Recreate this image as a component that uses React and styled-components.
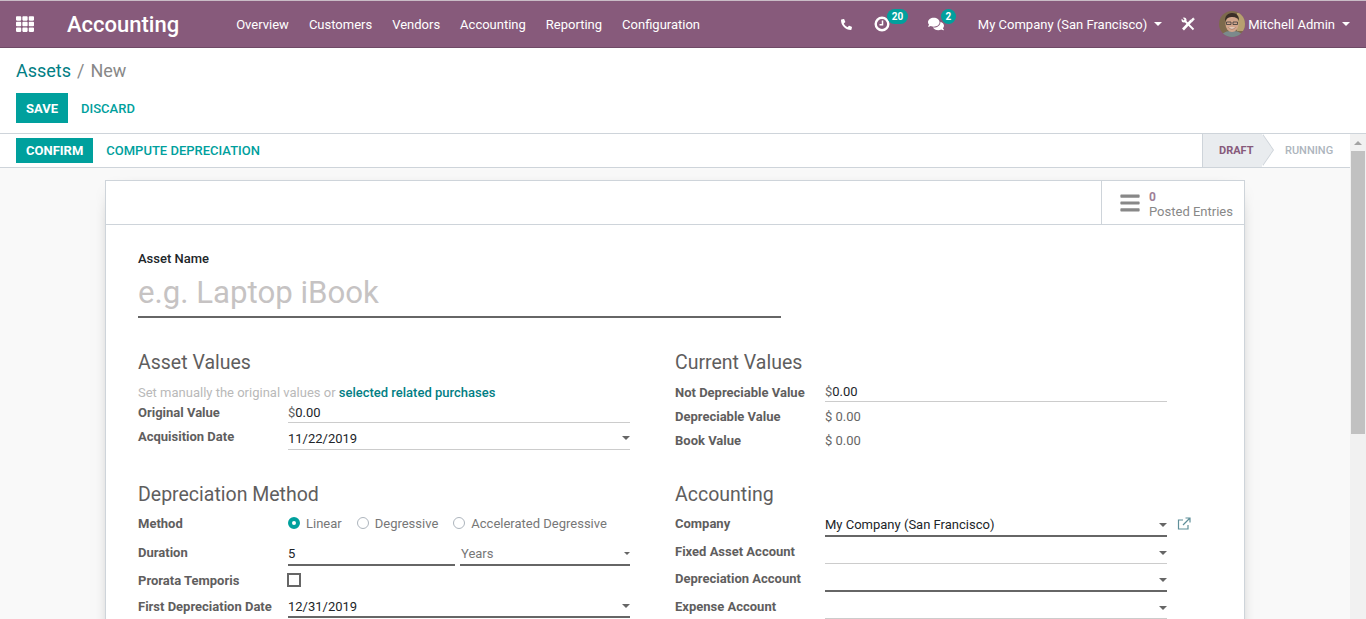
import styled, { createGlobalStyle } from "styled-components";
import { FaBars, FaComments, FaPhone, FaTh } from "react-icons/fa";

const GlobalStyle = createGlobalStyle`
  html, body {
    margin: 0;
    height: 100%;
    overflow: hidden;
  }
  body {
    font-family: Roboto, "Noto Sans", sans-serif;
    font-size: 13px;
    color: #4c4c4c;
    background: #fff;
  }
`;

const Page = styled.div`
  height: 100vh;
  display: flex;
  flex-direction: column;
`;

const NavBar = styled.header`
  flex: none;
  box-sizing: border-box;
  height: 48px;
  display: flex;
  align-items: center;
  background: #875a7b;
  border-top: 1px solid #c9bcc6;
  border-bottom: 1px solid #6f4a66;
  color: #fff;
`;

const AppsButton = styled.span`
  display: flex;
  width: 18px;
  margin-left: 16px;
  font-size: 18px;
`;

const Brand = styled.span`
  margin-left: 33px;
  margin-right: 57px;
  font-size: 22px;
  font-weight: 500;
`;

const MainMenu = styled.nav`
  display: flex;
  gap: 20px;
  font-size: 13px;
`;

const Systray = styled.div`
  margin-left: auto;
  display: flex;
  align-items: center;
  font-size: 13px;
`;

const TrayIcon = styled.span`
  position: relative;
  display: flex;
  align-items: center;
  justify-content: center;
  width: 16px;
  height: 16px;
  margin-right: ${({ $mr }) => $mr}px;
`;

const PhoneIcon = styled(FaPhone)`
  transform: scaleX(-1);
`;

const Badge = styled.span`
  position: absolute;
  top: -7px;
  left: ${({ $left }) => $left}px;
  height: 15px;
  min-width: 15px;
  padding: 0 ${({ $pad = 4 }) => $pad}px;
  box-sizing: border-box;
  border-radius: 8px;
  background: #00a09d;
  color: #fff;
  font-size: 10px;
  font-weight: 700;
  line-height: 15px;
  text-align: center;
`;

const Caret = styled.span`
  display: inline-block;
  width: 0;
  height: 0;
  margin-left: ${({ $ml = 0 }) => $ml}px;
  border-top: ${({ $small }) => ($small ? 3 : 4)}px solid ${({ $color = "currentColor" }) => $color};
  border-left: ${({ $small }) => ($small ? 3 : 4)}px solid transparent;
  border-right: ${({ $small }) => ($small ? 3 : 4)}px solid transparent;
`;

const TrayMenu = styled.span`
  display: flex;
  align-items: center;
  margin-right: ${({ $mr = 0 }) => $mr}px;
`;

const Avatar = styled.svg`
  width: 26px;
  height: 26px;
  margin-right: 3px;
  border-radius: 50%;
`;

const ControlPanel = styled.div`
  flex: none;
  box-sizing: border-box;
  height: 86px;
  padding: 9px 16px 0;
  background: #fff;
  border-bottom: 1px solid #ced4da;
`;

const Breadcrumb = styled.div`
  height: 26px;
  display: flex;
  align-items: center;
  gap: 6px;
  font-size: 18px;
  color: #888;
`;

const CrumbLink = styled.span`
  color: #017e84;
`;

const Buttons = styled.div`
  display: flex;
  align-items: center;
  margin-top: 10px;
`;

const PrimaryButton = styled.span`
  display: flex;
  align-items: center;
  height: ${({ $h }) => $h}px;
  padding: 0 10px;
  background: #00a09d;
  color: #fff;
  font-weight: 700;
  font-size: 13px;
`;

const LinkButton = styled.span`
  margin-left: 13px;
  color: #00a09d;
  font-weight: 500;
  font-size: 13px;
`;

const Workspace = styled.div`
  flex: 1;
  min-height: 0;
  display: flex;
`;

const Scroller = styled.main`
  flex: 1;
  min-width: 0;
  overflow: hidden;
  background: #f9f9f9;
`;

const ScrollRail = styled.div`
  flex: none;
  box-sizing: border-box;
  width: 16px;
  padding: 0 1px;
  background: #f1f1f1;
  display: flex;
  flex-direction: column;
  align-items: center;
`;

const ScrollUp = styled.span`
  height: 17px;
  display: flex;
  align-items: center;
  justify-content: center;
`;

const ScrollArrow = styled.span`
  width: 0;
  height: 0;
  border-bottom: 4px solid #a3a3a3;
  border-left: 4px solid transparent;
  border-right: 4px solid transparent;
`;

const ScrollThumb = styled.span`
  width: 100%;
  height: 283px;
  background: #c1c1c1;
`;

const StatusBar = styled.div`
  box-sizing: border-box;
  height: 34px;
  display: flex;
  align-items: center;
  justify-content: space-between;
  padding-left: 16px;
  background: #fff;
  border-bottom: 1px solid #ced4da;
`;

const StatusActions = styled.div`
  display: flex;
  align-items: center;
`;

const Stages = styled.div`
  display: flex;
  align-self: stretch;
  font-size: 11px;
  font-weight: 500;
`;

const CurrentStage = styled.span`
  position: relative;
  display: flex;
  align-items: center;
  width: 60px;
  padding-left: 16px;
  box-sizing: border-box;
  background: #e9ecef;
  border-left: 1px solid #ced4da;
  color: #875a7b;
  font-weight: 700;

  &::before,
  &::after {
    content: "";
    position: absolute;
    top: 0;
    border-top: 16.5px solid transparent;
    border-bottom: 16.5px solid transparent;
  }
  &::before {
    left: calc(100% + 1px);
    border-left: 11px solid #ced4da;
  }
  &::after {
    left: 100%;
    border-left: 11px solid #e9ecef;
  }
`;

const NextStage = styled.span`
  display: flex;
  align-items: center;
  width: 88px;
  padding-left: 23px;
  box-sizing: border-box;
  color: #adb5bd;
`;

const SheetArea = styled.div`
  padding: 12px 105px 0;
  overflow: hidden;
`;

const Sheet = styled.section`
  box-sizing: border-box;
  min-height: 581px;
  background: #fff;
  border: 1px solid #ced4da;
  box-shadow: 0 5px 20px -15px #000;
`;

const ButtonBox = styled.div`
  box-sizing: border-box;
  height: 44px;
  display: flex;
  justify-content: flex-end;
  border-bottom: 1px solid #ced4da;
`;

const StatButton = styled.div`
  box-sizing: border-box;
  width: 143px;
  display: flex;
  align-items: center;
  padding-left: 17px;
  border-left: 1px solid #ced4da;
  color: #888;
  font-size: 22px;
`;

const StatText = styled.div`
  margin-left: 8px;
  padding-top: 3px;
  font-size: 13px;
  line-height: 14px;
`;

const StatValue = styled.div`
  margin-bottom: 1px;
  color: #a07f97;
  font-weight: 700;
  font-size: 12px;
`;

const SheetBody = styled.div`
  padding: 25px 32px 0;
`;

const NameLabel = styled.div`
  height: 18px;
  line-height: 18px;
  color: #212529;
  font-weight: 500;
  font-size: 13px;
`;

const NameInput = styled.div`
  box-sizing: border-box;
  width: 643px;
  height: 50px;
  line-height: 50px;
  border-bottom: 2px solid #666;
  color: #c6c3c3;
  font-size: 31.2px;
  font-weight: 400;
`;

const Groups = styled.div`
  display: grid;
  grid-template-columns: 492px 492px;
  column-gap: 45px;
  row-gap: 29px;
  margin-top: 29px;
`;

const GroupTitle = styled.h2`
  margin: 0;
  height: 30px;
  line-height: 32px;
  color: #5f5e5e;
  font-size: 19.5px;
  font-weight: 400;
`;

const Hint = styled.div`
  margin-top: 6px;
  height: 19px;
  line-height: 19px;
  color: #b9b9b9;
`;

const HintLink = styled.span`
  color: #017e84;
  font-weight: 500;
`;

const Row = styled.div`
  display: grid;
  grid-template-columns: 150px 342px;
  grid-template-rows: 100%;
  align-items: center;
  height: ${({ $h }) => $h}px;
  margin-top: ${({ $mt = 0 }) => $mt}px;
`;

const Label = styled.span`
  padding-top: ${({ $dy = 0 }) => $dy}px;
  color: #5f5e5e;
  font-weight: 700;
  font-size: 13px;
  white-space: nowrap;
`;

const Field = styled.div`
  position: relative;
  box-sizing: border-box;
  height: ${({ $fh = 22 }) => $fh}px;
  display: flex;
  align-items: center;
  justify-content: space-between;
  padding-bottom: ${({ $pb = 1 }) => $pb}px;
  color: #212529;
  border-bottom: ${({ $strong }) => ($strong ? "2px solid #666" : "1px solid #ccc")};
  align-self: end;
`;

const Currency = styled.span`
  color: #666;
`;

const ReadOnly = styled.span`
  color: #666;
`;

const Methods = styled.div`
  display: flex;
  align-items: center;
  gap: 15px;
`;

const RadioItem = styled.span`
  display: flex;
  align-items: center;
  gap: 6px;
  color: #777;
`;

const Radio = styled.span`
  box-sizing: border-box;
  width: 12px;
  height: 12px;
  border-radius: 50%;
  border: ${({ $on }) => ($on ? "4px solid #00a09d" : "1px solid #adb5bd")};
  background: #fff;
`;

const Checkbox = styled.span`
  display: block;
  box-sizing: border-box;
  width: 14px;
  height: 14px;
  margin-left: -1px;
  border: 2px solid #666;
  background: #fff;
`;

const Duo = styled.div`
  display: grid;
  grid-template-columns: 167px 170px;
  column-gap: 5px;
  align-self: end;
`;

const Muted = styled.span`
  margin-left: 1px;
  color: #777;
`;

const ExternalIcon = styled.svg`
  position: absolute;
  left: 352px;
  top: 2px;
  width: 14px;
  height: 14px;
`;

const ClockIcon = () => (
  <svg width="16" height="16" viewBox="0 0 16 16" fill="none" stroke="#fff">
    <circle cx="8" cy="8" r="6.300" strokeWidth="2.400" />
    <path d="M8.500 4.500V8.700H5.500" strokeWidth="1.500" />
  </svg>
);

const ToolsIcon = () => (
  <svg width="14" height="14" viewBox="0 0 14 14" fill="#fff" stroke="#fff">
    <path d="M2 12.500L10.500 3.500" strokeWidth="2.600" />
    <path d="M3 3L12.500 12.500" strokeWidth="1.800" />
    <path d="M10 3L12 .8L13.500 2L11.500 4.500z" strokeWidth="0.500" />
    <circle cx="3" cy="3" r="2.500" stroke="none" />
    <path d="M0.500 0.500L3 3" stroke="#875a7b" strokeWidth="1.400" />
  </svg>
);

const AvatarImage = () => (
  <Avatar viewBox="0 0 26 26">
    <rect width="26" height="26" fill="#7d6a4c" />
    <rect x="18" y="2" width="8" height="18" fill="#b7a070" />
    <path d="M2 26c1-5 6-6 11-6s10 1 11 6z" fill="#7b8a8c" />
    <ellipse cx="13" cy="13" rx="6.500" ry="8" fill="#d2a68c" />
    <path d="M6 11c-.5-7 3.500-9 7.500-9s7 3 6.500 8c-1-3-3-4-6.500-4s-6.500 1-7.500 5z" fill="#3b2f28" />
    <path d="M7.500 11h4.500v2.500h-4.500zM14 11h4.500v2.500h-4.500z" fill="none" stroke="#3a3a3a" strokeWidth="0.800" />
    <path d="M9.500 16.500c2.500 2 4.500 2 7 0" fill="#f5ece4" stroke="#8a5a48" strokeWidth="0.600" />
  </Avatar>
);

const App = () => {
  return (
    <Page>
      <GlobalStyle />
      <NavBar>
        <AppsButton>
          <FaTh />
        </AppsButton>
        <Brand>Accounting</Brand>
        <MainMenu>
          <span>Overview</span>
          <span>Customers</span>
          <span>Vendors</span>
          <span>Accounting</span>
          <span>Reporting</span>
          <span>Configuration</span>
        </MainMenu>
        <Systray>
          <TrayIcon $mr={19}>
            <PhoneIcon size={11} />
          </TrayIcon>
          <TrayIcon $mr={38}>
            <ClockIcon />
            <Badge $left={13} $pad={5}>20</Badge>
          </TrayIcon>
          <TrayIcon $mr={34}>
            <FaComments size={16} />
            <Badge $left={13}>2</Badge>
          </TrayIcon>
          <TrayMenu $mr={18}>
            My Company (San Francisco)
            <Caret $ml={7} />
          </TrayMenu>
          <TrayIcon $mr={23}>
            <ToolsIcon />
          </TrayIcon>
          <TrayMenu $mr={16}>
            <AvatarImage />
            Mitchell Admin
            <Caret $ml={7} />
          </TrayMenu>
        </Systray>
      </NavBar>

      <ControlPanel>
        <Breadcrumb>
          <CrumbLink>Assets</CrumbLink>
          <span>/</span>
          <span>New</span>
        </Breadcrumb>
        <Buttons>
          <PrimaryButton $h={30}>SAVE</PrimaryButton>
          <LinkButton>DISCARD</LinkButton>
        </Buttons>
      </ControlPanel>

      <Workspace>
        <Scroller>
          <StatusBar>
            <StatusActions>
              <PrimaryButton $h={25}>CONFIRM</PrimaryButton>
              <LinkButton>COMPUTE DEPRECIATION</LinkButton>
            </StatusActions>
            <Stages>
              <CurrentStage>DRAFT</CurrentStage>
              <NextStage>RUNNING</NextStage>
            </Stages>
          </StatusBar>

          <SheetArea>
            <Sheet>
              <ButtonBox>
                <StatButton>
                  <FaBars />
                  <StatText>
                    <StatValue>0</StatValue>
                    Posted Entries
                  </StatText>
                </StatButton>
              </ButtonBox>

              <SheetBody>
                <NameLabel>Asset Name</NameLabel>
                <NameInput>e.g. Laptop iBook</NameInput>

                <Groups>
                  <div>
                    <GroupTitle>Asset Values</GroupTitle>
                    <Hint>
                      Set manually the original values or{" "}
                      <HintLink>selected related purchases</HintLink>
                    </Hint>
                    <Row $h={21}>
                      <Label>Original Value</Label>
                      <Field $fh={21} $pb={0}>
                        <span>
                          <Currency>$</Currency>0.00
                        </span>
                      </Field>
                    </Row>
                    <Row $h={27}>
                      <Label>Acquisition Date</Label>
                      <Field>
                        11/22/2019
                        <Caret $color="#666" />
                      </Field>
                    </Row>
                  </div>

                  <div>
                    <GroupTitle>Current Values</GroupTitle>
                    <Row $h={20} $mt={5}>
                      <Label>Not Depreciable Value</Label>
                      <Field $fh={20}>
                        <span>
                          <Currency>$</Currency>0.00
                        </span>
                      </Field>
                    </Row>
                    <Row $h={28}>
                      <Label>Depreciable Value</Label>
                      <ReadOnly>$ 0.00</ReadOnly>
                    </Row>
                    <Row $h={20}>
                      <Label>Book Value</Label>
                      <ReadOnly>$ 0.00</ReadOnly>
                    </Row>
                  </div>

                  <div>
                    <GroupTitle>Depreciation Method</GroupTitle>
                    <Row $h={28}>
                      <Label>Method</Label>
                      <Methods>
                        <RadioItem>
                          <Radio $on />
                          Linear
                        </RadioItem>
                        <RadioItem>
                          <Radio />
                          Degressive
                        </RadioItem>
                        <RadioItem>
                          <Radio />
                          Accelerated Degressive
                        </RadioItem>
                      </Methods>
                    </Row>
                    <Row $h={29}>
                      <Label $dy={1}>Duration</Label>
                      <Duo>
                        <Field $strong>5</Field>
                        <Field $strong>
                          <Muted>Years</Muted>
                          <Caret $small $color="#666" />
                        </Field>
                      </Duo>
                    </Row>
                    <Row $h={28}>
                      <Label>Prorata Temporis</Label>
                      <Checkbox />
                    </Row>
                    <Row $h={24}>
                      <Label>First Depreciation Date</Label>
                      <Field $strong $pb={0}>
                        12/31/2019
                        <Caret $color="#666" />
                      </Field>
                    </Row>
                  </div>

                  <div>
                    <GroupTitle>Accounting</GroupTitle>
                    <Row $h={28}>
                      <Label>Company</Label>
                      <Field $strong>
                        My Company (San Francisco)
                        <Caret $color="#666" />
                        <ExternalIcon viewBox="0 0 14 14" fill="none" stroke="#5f8f99" strokeWidth="1.200">
                          <path d="M11 8v4H1.500V3H6" />
                          <path d="M6 8l6.500-6.500M8.500 1h4.500v4.500" />
                        </ExternalIcon>
                      </Field>
                    </Row>
                    <Row $h={27}>
                      <Label $dy={1}>Fixed Asset Account</Label>
                      <Field $pb={0}>
                        <span />
                        <Caret $color="#666" />
                      </Field>
                    </Row>
                    <Row $h={28}>
                      <Label>Depreciation Account</Label>
                      <Field $strong>
                        <span />
                        <Caret $color="#666" />
                      </Field>
                    </Row>
                    <Row $h={27}>
                      <Label $dy={1}>Expense Account</Label>
                      <Field $pb={0}>
                        <span />
                        <Caret $color="#666" />
                      </Field>
                    </Row>
                  </div>
                </Groups>
              </SheetBody>
            </Sheet>
          </SheetArea>
        </Scroller>
        <ScrollRail>
          <ScrollUp>
            <ScrollArrow />
          </ScrollUp>
          <ScrollThumb />
        </ScrollRail>
      </Workspace>
    </Page>
  );
};

export default App;
